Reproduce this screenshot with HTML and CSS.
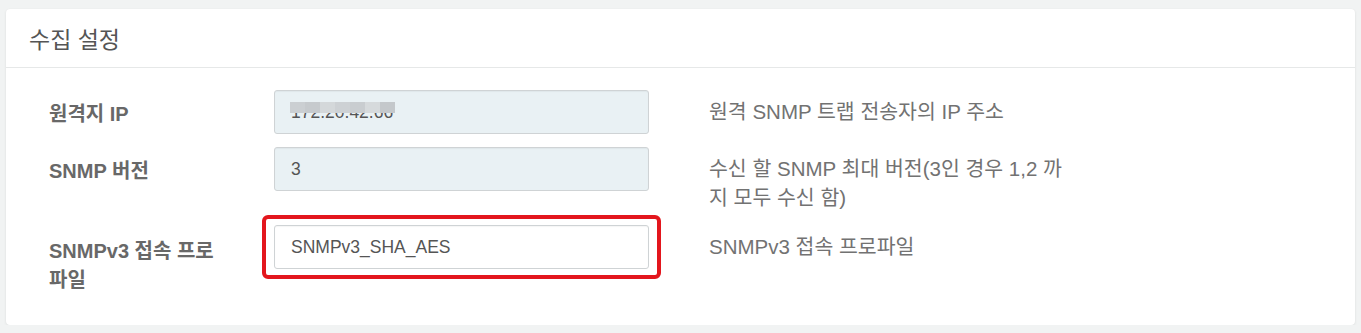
FILE: index.html
```html
<!DOCTYPE html>
<html lang="ko">
<head>
<meta charset="utf-8">
<title>수집 설정</title>
<link rel="stylesheet" href="styles.css">
</head>
<body>
<div class="card">
  <div class="card-head">수집 설정</div>
  <div class="card-body">
    <div class="row">
      <label class="lbl">원격지 IP</label>
      <div class="ctl">
        <div class="field">
          <input class="inp ro" type="text" value="172.20.42.66" readonly>
          <span class="mosaic"><i class="m1"></i><i class="m2"></i><i class="m3"></i><i class="m4"></i><i class="m5"></i><i class="m6"></i><i class="m7"></i></span>
        </div>
      </div>
      <p class="desc">원격 SNMP 트랩 전송자의 IP 주소</p>
    </div>
    <div class="row">
      <label class="lbl">SNMP 버전</label>
      <div class="ctl">
        <input class="inp ro" type="text" value="3" readonly>
      </div>
      <p class="desc">수신 할 SNMP 최대 버전(3인 경우 1,2 까지 모두 수신 함)</p>
    </div>
    <div class="row">
      <label class="lbl lbl-low">SNMPv3 접속 프로파일</label>
      <div class="ctl">
        <div class="hl">
          <input class="inp" type="text" value="SNMPv3_SHA_AES">
        </div>
      </div>
      <p class="desc">SNMPv3 접속 프로파일</p>
    </div>
  </div>
</div>
</body>
</html>
```

FILE: styles.css
```css
* { box-sizing: border-box; }

html, body {
  margin: 0;
  background: #f1f3f3;
}

body {
  padding: 9px 6px 0 6px;
  font-family: "Liberation Sans", "Noto Sans CJK KR", sans-serif;
  line-height: 1.42857;
}

.card {
  background: #ffffff;
  border-radius: 4px;
  box-shadow: 0 1px 3px rgba(0, 0, 0, 0.08), 0 0 1px rgba(0, 0, 0, 0.05);
}

.card-head {
  height: 59px;
  padding: 15px 0 0 23px;
  font-size: 23px;
  color: #555555;
  border-bottom: 1px solid #e6e8e8;
}

.card-body {
  padding: 22px 0 31px 43px;
}

.row {
  display: flex;
  align-items: flex-start;
  margin-bottom: 13px;
}

.row:last-child {
  margin-bottom: 0;
}

.lbl {
  flex: none;
  width: 225px;
  padding: 10px 52px 0 0;
  font-size: 20px;
  font-weight: bold;
  color: #686868;
}

.lbl-low {
  padding-top: 12px;
}

.ctl {
  width: 375px;
  flex: none;
}

.field {
  position: relative;
}

.inp {
  display: block;
  width: 100%;
  height: 44px;
  margin: 0;
  padding: 0 16px;
  border: 1px solid #cfd3d5;
  border-radius: 3px;
  background: #ffffff;
  font-family: "Liberation Sans", "Noto Sans CJK KR", sans-serif;
  font-size: 17.5px;
  color: #555555;
  outline: none;
  box-shadow: inset 0 1px 1px rgba(0, 0, 0, 0.04);
}

.inp.ro {
  background: #e9f1f4;
}

.mosaic {
  position: absolute;
  left: 16px;
  top: 12px;
  height: 11px;
  display: flex;
}

.mosaic i {
  display: block;
  width: 15px;
  height: 11px;
}

.m1 { background: #cbcfd2; }
.m2 { background: #c6cacd; }
.m3 { background: #d4d8da; }
.m4 { background: #cdd1d4; }
.m5 { background: #c9cdd0; }
.m6 { background: #d6dadc; }
.m7 { background: #c4c8cb; }

.hl {
  margin: -10px -12px;
  padding: 6px 8px;
  border: 4px solid #e3161d;
  border-radius: 6px;
}

.desc {
  width: 364px;
  margin: 0 0 0 60px;
  padding-top: 8px;
  font-size: 20.5px;
  line-height: 28.6px;
  color: #727272;
}
```
